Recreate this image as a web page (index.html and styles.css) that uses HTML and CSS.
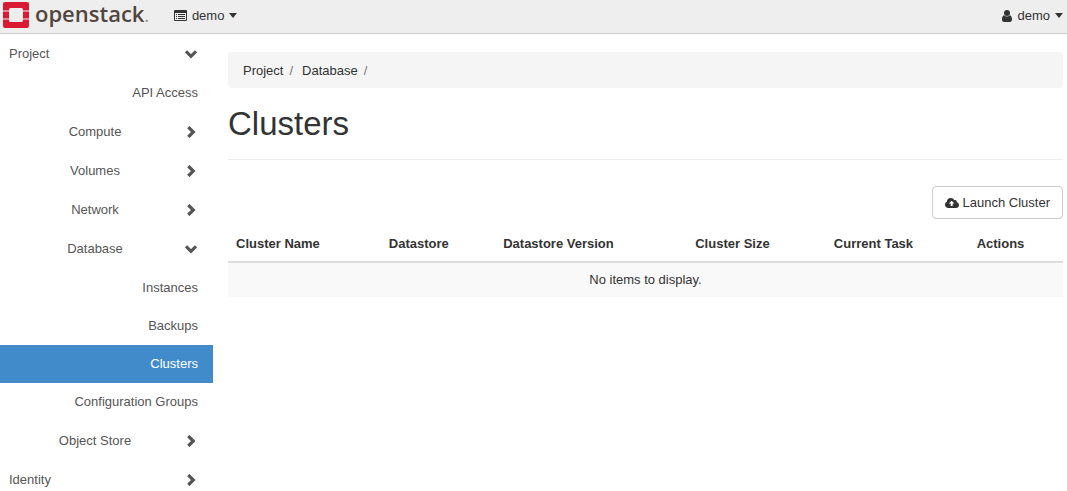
FILE: index.html
```html
<!DOCTYPE html>
<html lang="en">
<head>
<meta charset="utf-8">
<title>Clusters - OpenStack Dashboard</title>
<link rel="stylesheet" href="styles.css">
</head>
<body>
<svg class="sprite" aria-hidden="true">
  <symbol id="chevron" viewBox="0 0 12 12"><path d="M3.300 1 8.300 6l-5 5" fill="none" stroke="currentColor" stroke-width="3.200"/></symbol>
  <symbol id="caret" viewBox="0 0 8 5"><path d="M0 0h8L4 5z" fill="currentColor"/></symbol>
</svg>
<header class="topbar">
  <a class="brand" href="#">
    <svg class="brand-mark" viewBox="0 0 26 26" aria-hidden="true">
      <g fill="#da1a32">
        <path d="M2 0h22a2 2 0 0 1 2 2v6.500h-6V7.500a1.500 1.500 0 0 0-1.500-1.500h-11A1.500 1.500 0 0 0 6 7.500v1H0V2a2 2 0 0 1 2-2z"/>
        <path d="M0 9.500h6v7H0zM20 9.500h6v7h-6z"/>
        <path d="M0 17.500h6v1A1.500 1.500 0 0 0 7.500 20h11a1.500 1.500 0 0 0 1.500-1.500v-1h6V24a2 2 0 0 1-2 2H2a2 2 0 0 1-2-2z"/>
      </g>
    </svg>
    <span class="brand-name">openstack<span class="brand-dot">.</span></span>
  </a>
  <button class="menu" type="button">
    <svg class="icon-list" viewBox="0 0 13 11" aria-hidden="true">
      <path fill="currentColor" fill-rule="evenodd" d="M1 0h11a1 1 0 0 1 1 1v9a1 1 0 0 1-1 1H1a1 1 0 0 1-1-1V1a1 1 0 0 1 1-1zM1 3v7h11V3zM2 4h1v1H2zM4 4h7v1H4zM2 6h1v1H2zM4 6h7v1H4zM2 8h1v1H2zM4 8h7v1H4z"/>
    </svg>
    demo
    <svg class="caret" aria-hidden="true"><use href="#caret"/></svg>
  </button>
  <button class="menu menu-user" type="button">
    <svg class="icon-user" viewBox="0 0 10 12" aria-hidden="true">
      <circle cx="5" cy="3" r="3" fill="currentColor"/>
      <path fill="currentColor" d="M2.200 5.200C.6 5.700 0 7.500 0 9.500 0 11 .8 12 2 12h6c1.200 0 2-1 2-2.500 0-2-.6-3.800-2.200-4.300a3.800 3.800 0 0 1-5.600 0z"/>
    </svg>
    demo
    <svg class="caret" aria-hidden="true"><use href="#caret"/></svg>
  </button>
</header>
<div class="layout">
  <nav class="sidebar" aria-label="Main">
    <a class="group top" href="#"><span class="label">Project</span><svg class="chevron open"><use href="#chevron"/></svg></a>
    <a class="leaf lone" href="#">API Access</a>
    <a class="group" href="#"><span class="label">Compute</span><svg class="chevron"><use href="#chevron"/></svg></a>
    <a class="group" href="#"><span class="label">Volumes</span><svg class="chevron"><use href="#chevron"/></svg></a>
    <a class="group" href="#"><span class="label">Network</span><svg class="chevron"><use href="#chevron"/></svg></a>
    <a class="group" href="#"><span class="label">Database</span><svg class="chevron open"><use href="#chevron"/></svg></a>
    <div class="submenu">
      <a class="leaf" href="#">Instances</a>
      <a class="leaf" href="#">Backups</a>
      <a class="leaf active" href="#" aria-current="page">Clusters</a>
      <a class="leaf" href="#">Configuration Groups</a>
    </div>
    <a class="group" href="#"><span class="label">Object Store</span><svg class="chevron"><use href="#chevron"/></svg></a>
    <a class="group top" href="#"><span class="label">Identity</span><svg class="chevron"><use href="#chevron"/></svg></a>
  </nav>
  <main class="content">
    <ol class="breadcrumb">
      <li><a href="#">Project</a></li>
      <li><a href="#">Database</a></li>
    </ol>
    <h1 class="title">Clusters</h1>
    <div class="actions">
      <button class="launch" type="button">
        <svg class="icon-cloud" viewBox="0 0 14 10" aria-hidden="true">
          <path fill="currentColor" fill-rule="evenodd" d="M11.700 4.200c1.400.3 2.300 1.400 2.300 2.800C14 8.700 12.700 10 11 10H3.300C1.500 10 0 8.600 0 6.700c0-1.300.7-2.400 1.900-3C1.900 1.600 3.600 0 5.700 0c1.600 0 3 .9 3.600 2.300 1.200-.8 2.800.2 2.400 1.900zM6.600 2.700 3.800 5.500h1.900V8h2V5.500h1.800z"/>
        </svg>
        Launch Cluster
      </button>
    </div>
    <table class="grid">
      <colgroup><col class="c-name"><col class="c-store"><col class="c-version"><col class="c-size"><col class="c-task"><col></colgroup>
      <thead>
        <tr><th scope="col">Cluster Name</th><th scope="col">Datastore</th><th scope="col">Datastore Version</th><th scope="col">Cluster Size</th><th scope="col">Current Task</th><th scope="col">Actions</th></tr>
      </thead>
      <tbody>
        <tr><td colspan="6">No items to display.</td></tr>
      </tbody>
    </table>
  </main>
</div>
</body>
</html>
```
FILE: styles.css
```css
* { box-sizing: border-box; }
body {
  margin: 0;
  font: 13px/18px "Liberation Sans", Arial, sans-serif;
  color: #333;
  background: #fff;
}
a { color: inherit; text-decoration: none; }
button { font: inherit; color: inherit; cursor: pointer; }
svg { flex: none; }
.sprite { display: none; }

.topbar {
  display: flex;
  align-items: center;
  height: 34px;
  padding: 0 4px 2px 3px;
  background: #eee;
  border-bottom: 1px solid #ccc;
}
.brand { display: flex; align-items: flex-start; gap: 6px; height: 28px; }
.brand-mark { width: 26px; height: 26px; }
.brand-name {
  font: 600 22px/32px "Open Sans", sans-serif;
  color: #51463f;
  margin-top: -5px;
}
.brand-dot { color: #999; font-size: 16px; }
.menu {
  display: flex;
  align-items: center;
  gap: 5px;
  margin-left: 25px;
  padding: 0;
  border: 0;
  background: none;
}
.menu-user { margin-left: auto; }
.icon-list { width: 13px; height: 11px; }
.icon-user { width: 10px; height: 12px; }
.caret { width: 8px; height: 5px; }

.layout { display: flex; }
.sidebar { flex: none; width: 213px; color: #555; }
.group { display: flex; align-items: center; height: 39px; padding: 0 16px 0 5px; }
.label { flex: 1; text-align: center; }
.top .label { text-align: left; padding-left: 4px; }
.chevron { width: 12px; height: 12px; }
.open { transform: rotate(90deg); }
.leaf { display: block; padding: 10px 15px; text-align: right; }
.lone { padding-top: 11px; }
.submenu { padding-top: 1px; }
.active { background: #428bca; color: #fff; }

.content { flex: 1; padding: 18px 4px 0 15px; }
.breadcrumb {
  display: flex;
  margin: 0;
  padding: 10px 15px 8px;
  list-style: none;
  background: #f5f5f5;
  border-radius: 4px;
}
.breadcrumb li::after { content: "/"; padding: 0 9px 0 6px; color: #777; }
.title {
  margin: 17px 0 26px;
  padding-bottom: 17px;
  font-size: 33px;
  line-height: 37px;
  font-weight: 400;
  border-bottom: 1px solid #eee;
}
.actions { display: flex; justify-content: flex-end; margin-bottom: 7px; }
.launch {
  display: flex;
  align-items: center;
  gap: 4px;
  height: 33px;
  padding: 0 12px;
  background: #fff;
  border: 1px solid #ccc;
  border-radius: 4px;
}
.icon-cloud { width: 14px; height: 10px; }
.grid { width: 100%; border-collapse: separate; border-spacing: 0; table-layout: fixed; }
.grid th { padding: 9px 8px 8px; text-align: left; border-bottom: 2px solid #ddd; }
.grid td { padding: 8px; text-align: center; background: #f9f9f9; }
.c-name { width: 18.3%; }
.c-store { width: 13.7%; }
.c-version { width: 23%; }
.c-size { width: 16.6%; }
.c-task { width: 17.1%; }
```
